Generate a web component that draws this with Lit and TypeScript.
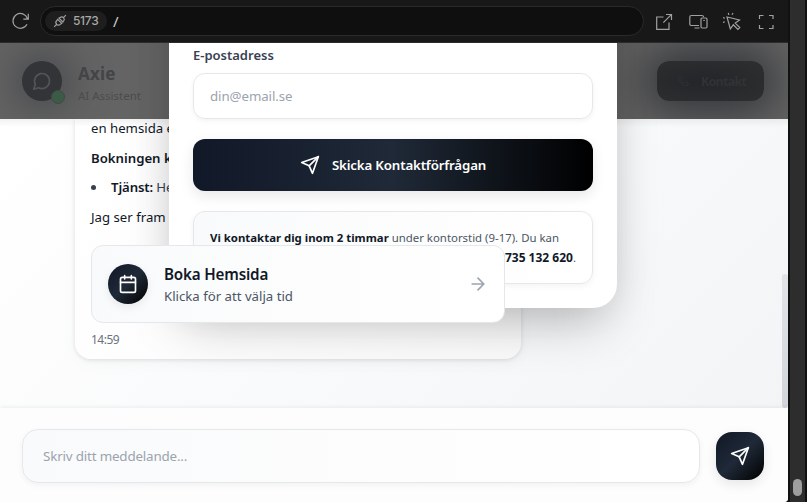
import { LitElement, html, css, svg } from "lit";
import { customElement } from "lit/decorators.js";

const sendIcon = html`<svg class="send" viewBox="0 0 24 24">${svg`<path d="m22 2-7 20-4-9-9-4Z"/><path d="M22 2 11 13"/>`}</svg>`;

@customElement("browser-bar")
class BrowserBar extends LitElement {
  static styles = css`
    :host { display: flex; box-sizing: border-box; height: 43px; flex: none; align-items: center; background: #181818; border-bottom: 1px solid #2b2b2b; padding: 0 8px 0 11px; font-family: "Noto Sans", sans-serif; }
    svg { fill: none; stroke: #a0a0a0; stroke-width: 1.2; display: block; flex: none; }
    .address { display: flex; flex: none; align-items: center; box-sizing: border-box; width: 604px; height: 30px; margin-left: 10px; border: 1px solid #2a2a2a; border-radius: 15px; background: #0f0f0f; padding-left: 4px; }
    .port { display: flex; align-items: center; gap: 7px; box-sizing: border-box; width: 62px; height: 20px; padding-left: 8px; border-radius: 10px; background: #1e1e1e; color: #a8a8a8; font: 500 12px/20px Inter, sans-serif; letter-spacing: -0.3px; }
    .port span { margin-left: -1px; }
    .path { color: #d0d0d0; font-size: 15px; line-height: 20px; margin-left: 6px; }
    .tools { display: flex; align-items: center; margin-left: 11px; gap: 15px; padding-top: 1px; }
  `;
  render() {
    return html`
      <svg width="19" height="20" viewBox="0 0 19 20"><path d="M16.4 7.5A7.4 7.4 0 1 0 16 13.2M17.3 2.8v5.4h-5"/></svg>
      <div class="address">
        <span class="port"><svg width="14" height="14" viewBox="0 0 14 14"><path d="M1.2 12.8 3.800 10.200M4.200 4.800l5 5M4.900 5.500 3.700 6.700a2.500 2.500 0 0 0 3.600 3.600l1.200-1.200M5.500 3.700l4.800 4.800M6.200 4.400l1-1a2.500 2.500 0 0 1 3.500 3.500l-1 1M10.700 3.300l2.100-2.100"/></svg><span>5173</span></span>
        <span class="path">/</span>
      </div>
      <div class="tools">
        <svg width="18" height="18" viewBox="0 0 18 18"><path d="M8.5 4H1.7v12.3h12.3V9.500M11 1.5h5.5V7M16.300 1.700 8.300 9.700"/></svg>
        <svg width="20" height="18" viewBox="0 0 20 18"><path d="M11 12.500H3.300A1.500 1.500 0 0 1 1.800 11V4A1.500 1.500 0 0 1 3.300 2.500H14A1.500 1.500 0 0 1 15.500 4M6.500 15h5"/><rect x="13" y="5" width="6" height="10" rx="1.200"/><path d="M15.300 7.500h1.500"/></svg>
        <svg width="20" height="20" viewBox="1 0 20 20"><path d="m5 5 3.300 12 3-4.200 4.600 4.600 1.900-1.900-4.600-4.400L17.500 8ZM6.800 2.800 6.300.8M10 2.800l1-1.800M2.800 6.200.8 5.500M2.800 9.700 1 10.500"/></svg>
        <svg width="20" height="18" viewBox="2 0 20 18"><path d="M3.500 6V2.500H7.500M13 2.500h4V6M17 12v3.500h-4M7.500 15.500h-4V12"/></svg>
      </div>`;
  }
}

@customElement("chat-page")
class ChatPage extends LitElement {
  static styles = css`
    :host { display: block; position: relative; width: 788px; height: 459px; overflow: hidden; background: #fff; border-bottom-right-radius: 4px; font-family: "Noto Sans", sans-serif; color: #111827; }
    * { box-sizing: border-box; }
    svg { fill: none; stroke: currentColor; stroke-width: 2; stroke-linecap: round; stroke-linejoin: round; display: block; flex: none; }
    .layout { display: flex; flex-direction: column; height: 459px; }
    .header { height: 76px; flex: none; display: flex; align-items: center; padding: 0 24px 0 22px; overflow: hidden; background: #646464; }
    .avatar { position: relative; width: 40px; height: 40px; border-radius: 50%; background: #323437; box-shadow: 0 0 40px 6px #2b2e34a0; color: #525456; display: grid; place-items: center; }
    .online { position: absolute; right: -3px; bottom: -3px; width: 14px; height: 14px; border-radius: 50%; background: #3b5b47; border: 1px solid #404a45; }
    .brand { position: relative; margin-left: 16px; margin-top: 6px; }
    .name { font-size: 17px; line-height: 24px; font-weight: 700; color: #434445; letter-spacing: 0.2px; }
    .role { font-size: 11.5px; line-height: 20px; color: #4b4c4d; }
    .contact { margin-left: auto; width: 107px; height: 40px; border-radius: 12px; background: radial-gradient(ellipse at 45% 50%, #232529, #2e2f30); box-shadow: 0 0 44px 12px #24272cc0; color: #313234; display: flex; align-items: center; gap: 12px; padding-left: 20px; font-size: 12.5px; letter-spacing: -0.75px; font-weight: 700; }
    .feed { flex: 1; overflow: hidden; position: relative; background: linear-gradient(135deg, #fff 0%, #f9fafb 50%, #f3f4f6 100%); padding: 0 75px; }
    .feed::before { content: ""; position: absolute; left: 0; right: 0; top: 0; height: 8px; background: linear-gradient(#0000000d, transparent); }
    .bubble { width: 446px; height: 240px; border-radius: 0 0 16px 16px; background: linear-gradient(120deg, #fff, #fafafb); box-shadow: 0 1px 4px #0000001c, 0 4px 15px #00000008; padding: 0 16px; font-size: 13.2px; line-height: 20px; display: flex; flex-direction: column; }
    .bubble > div { white-space: nowrap; height: 20px; flex: none; }
    .l1 { margin-top: -1px; }
    .l2 { margin-top: 10px; font-weight: 600; }
    .l3 { margin-top: 9px; display: flex; align-items: center; color: #374151; }
    .l3::before { content: ""; width: 5px; height: 5px; border-radius: 50%; background: #374151; margin-right: 15px; }
    .l3 b { font-weight: 600; color: #111827; margin-right: 3px; letter-spacing: -0.1px; }
    .l4 { margin-top: 10px; }
    .bubble > .time { margin-top: auto; margin-bottom: 9px; font-size: 12px; color: #6b7280; letter-spacing: -0.5px; }
    .scroll { position: absolute; right: 0; top: 155px; width: 6px; height: 134px; border-radius: 3px; background: linear-gradient(#e1e3e7, #d1d5db); }
    .composer { height: 94px; flex: none; background: #fdfdfd; box-shadow: 0 -1px 4px #00000010; position: relative; display: flex; align-items: center; gap: 16px; padding: 2px 24px 0 22px; }
    .message { width: 678px; height: 54px; border: 1px solid #e5e7eb; border-radius: 16px; background: linear-gradient(90deg, #f9fafb, #fff); box-shadow: 0 2px 6px #0000000d; color: #9ca3af; font-size: 13.4px; letter-spacing: -0.18px; line-height: 52px; padding-left: 20px; }
    .submit { width: 48px; height: 48px; border-radius: 16px; color: #fff; background: linear-gradient(135deg, #111827, #1f2937 50%, #000); box-shadow: 0 4px 12px #00000018; display: grid; place-items: center; }
    .submit .send, .cta .send { width: 20px; height: 20px; }
    .modal { position: absolute; left: 169px; top: -120px; width: 448px; height: 385px; border-radius: 0 0 24px 24px; background: #fff; box-shadow: 0 25px 50px -12px #00000040, 0 0 40px #00000010; padding: 122px 24px 24px; display: flex; flex-direction: column; }
    .label { font-size: 13px; line-height: 20px; font-weight: 600; color: #374151; }
    .email { margin-top: 8px; height: 46px; border: 1px solid #e5e7eb; border-radius: 12px; box-shadow: 0 2px 5px #0000000d; padding-left: 16px; line-height: 44px; font-size: 13.3px; color: #9ca3af; letter-spacing: -0.08px; }
    .cta { margin-top: 20px; height: 52px; border-radius: 12px; background: linear-gradient(90deg, #111827, #1f2937 50%, #000); box-shadow: 0 5px 14px #00000018; color: #fff; display: flex; align-items: center; justify-content: center; gap: 12px; font-size: 13.3px; font-weight: 600; letter-spacing: -0.17px; }
    .note { margin-top: 20px; height: 73px; border: 1px solid #e5e7eb; border-radius: 12px; background: linear-gradient(90deg, #f9fafb, #fff); box-shadow: 0 2px 6px #0000000d; padding: 16px; font-size: 11.4px; line-height: 20px; color: #4b5563; white-space: nowrap; }
    .note b { color: #111827; font-weight: 700; }
    .phone { text-align: right; line-height: 19px; }
    .phone b { font-size: 12px; }
    .booking { position: absolute; left: 91px; top: 202px; width: 414px; height: 78px; border: 1px solid #e5e7eb; border-radius: 12px; background: linear-gradient(90deg, #f9fafb, #fff); display: flex; align-items: center; padding: 0 16px; }
    .cal { width: 40px; height: 40px; border-radius: 50%; color: #fff; background: linear-gradient(135deg, #111827, #1f2937 50%, #000); display: grid; place-items: center; box-shadow: 0 3px 8px #00000014; }
    .booktext { margin-left: 16px; flex: 1; white-space: nowrap; }
    .title { font-size: 15.2px; line-height: 24px; font-weight: 600; letter-spacing: -0.18px; }
    .sub { font-size: 13.2px; line-height: 20px; color: #4b5563; }
    .arrow { color: #9ca3af; }
  `;
  render() {
    return html`
      <div class="layout">
        <div class="header">
          <div class="avatar"><svg width="20" height="20" viewBox="0 0 24 24"><path d="M7.900 20A9 9 0 1 0 4 16.100L2 22Z"/></svg><i class="online"></i></div>
          <div class="brand"><div class="name">Axie</div><div class="role">AI Assistent</div></div>
          <div class="contact"><svg width="12" height="12" viewBox="0 0 24 24"><path d="M22 16.900v3a2 2 0 0 1-2.200 2A19.800 19.800 0 0 1 2.100 4.200 2 2 0 0 1 4.100 2h3a2 2 0 0 1 2 1.700c.1 1 .4 1.900.7 2.800a2 2 0 0 1-.5 2.100L8.100 9.900a16 16 0 0 0 6 6l1.300-1.300a2 2 0 0 1 2.100-.4c.9.300 1.800.600 2.800.700a2 2 0 0 1 1.700 2Z"/></svg><span>Kontakt</span></div>
        </div>
        <div class="feed">
          <div class="bubble">
            <div class="l1">en hemsida e</div>
            <div class="l2">Bokningen k</div>
            <div class="l3"><b>Tjänst:</b>Hemsida</div>
            <div class="l4">Jag ser fram</div>
            <div class="time">14:59</div>
          </div>
          <i class="scroll"></i>
        </div>
        <div class="composer"><div class="message"><span>Skriv ditt meddelande...</span></div><div class="submit">${sendIcon}</div></div>
      </div>
      <div class="modal">
        <div class="label">E-postadress</div>
        <div class="email">din@email.se</div>
        <div class="cta">${sendIcon}<span>Skicka Kontaktförfrågan</span></div>
        <div class="note"><div><b>Vi kontaktar dig inom 2 timmar</b> under kontorstid (9-17). Du kan</div><div class="phone">också ringa oss direkt på <b>0735 132 620</b>.</div></div>
      </div>
      <div class="booking">
        <div class="cal"><svg width="20" height="20" viewBox="0 0 24 24"><rect x="3" y="4" width="18" height="18" rx="2"/><path d="M8 2v4M16 2v4M3 10h18"/></svg></div>
        <div class="booktext"><div class="title">Boka Hemsida</div><div class="sub">Klicka för att välja tid</div></div>
        <svg class="arrow" width="20" height="20" viewBox="0 0 24 24"><path d="M5 12h14M12 5l7 7-7 7"/></svg>
      </div>`;
  }
}

@customElement("app-root")
class AppRoot extends LitElement {
  static styles = css`
    :host { display: flex; width: 807px; height: 502px; background: #101111; overflow: hidden; }
    .window { width: 788px; display: flex; flex-direction: column; }
    .gutter { box-sizing: border-box; width: 15px; margin-left: 2px; background: #2d2d2d; display: flex; align-items: flex-end; padding: 0 3px 6px; }
    .thumb { width: 9px; height: 17px; border-radius: 5px; background: #9e9e9e; }
  `;
  render() {
    return html`<div class="window"><browser-bar></browser-bar><chat-page></chat-page></div><div class="gutter"><div class="thumb"></div></div>`;
  }
}
